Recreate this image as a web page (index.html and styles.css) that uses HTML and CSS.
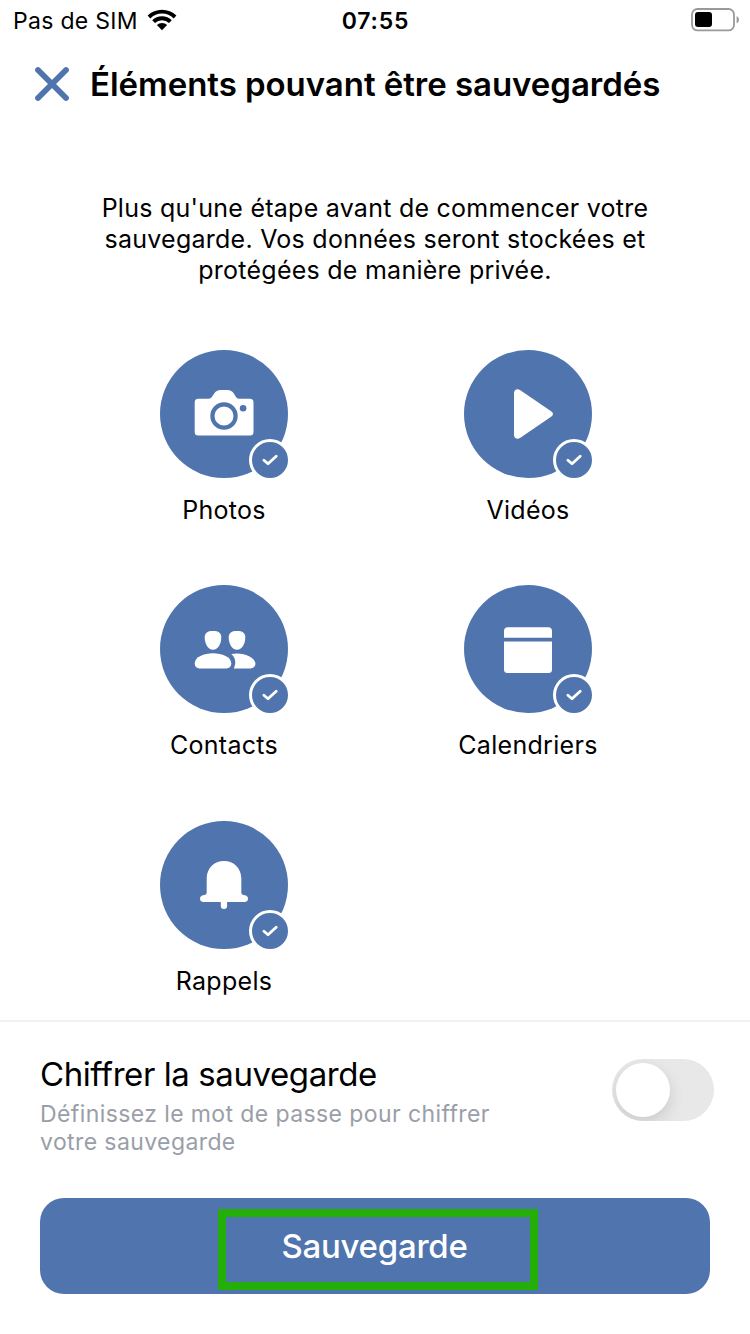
FILE: index.html
```html
<!DOCTYPE html>
<html lang="fr">
<head>
    <meta charset="UTF-8">
    <meta name="viewport" content="width=device-width, initial-scale=1.0">
    <title>Sauvegarde</title>
    <link rel="stylesheet" href="styles.css">
</head>
<body>
    <div class="status-bar">
        <div class="carrier">
            <span class="carrier-name">Pas de SIM</span>
            <svg class="wifi" width="30" height="22" viewBox="0 0 30 22">
                <path d="M0.6 6.6 A20.4 20.4 0 0 1 29.4 6.6 L26.7 9.4 A16.6 16.6 0 0 0 3.3 9.4 Z"/>
                <path d="M5.2 11.3 A13.9 13.9 0 0 1 24.8 11.3 L22 14.1 A9.9 9.9 0 0 0 8 14.1 Z"/>
                <path d="M9.9 16 A7.2 7.2 0 0 1 20.1 16 L15 21.2 Z"/>
            </svg>
        </div>
        <span class="time">07:55</span>
        <svg class="battery" width="49" height="24" viewBox="0 0 49 24">
            <rect x="1" y="1" width="42" height="21.4" rx="5.5" fill="none" stroke="#999" stroke-width="1.8"/>
            <rect x="4" y="4" width="17" height="15" rx="3"/>
            <path d="M45.6 8 Q48 9 48 11.7 Q48 14.4 45.6 15.4 Z" fill="#999"/>
        </svg>
    </div>

    <div class="header">
        <svg class="close" width="36" height="36" viewBox="0 0 36 36">
            <path d="M4 4 L32 32 M32 4 L4 32"/>
        </svg>
        <h1>Éléments pouvant être sauvegardés</h1>
    </div>

    <p class="intro">Plus qu'une étape avant de commencer votre<br>sauvegarde. Vos données seront stockées et<br>protégées de manière privée.</p>

    <div class="items">
        <div class="item">
            <svg class="icon" viewBox="0 0 128 128">
                <circle class="blue" cx="64" cy="64" r="64"/>
                <path class="white" d="M38.2 48.8 H48.5 Q50.8 48.8 52 46.8 L54 43.7 Q56.5 40 60.5 40 H67.5 Q71.5 40 74 43.7 L75.8 46.8 Q77 48.8 79 48.8 H90 Q93.5 48.8 93.5 52.3 V82 Q93.5 85.5 90 85.5 H38.2 Q34.7 85.5 34.7 82 V52.3 Q34.7 48.8 38.2 48.8 Z"/>
                <circle cx="64" cy="66" r="11.6" fill="none" stroke="#5074ae" stroke-width="4.2"/>
                <circle class="blue" cx="83.1" cy="58.2" r="3.3"/>
                <circle class="badge" cx="110" cy="110" r="19.5"/>
                <path class="check" d="M103.9 110.2 L108 113.7 L116.2 106.3"/>
            </svg>
            <span class="label">Photos</span>
        </div>
        <div class="item">
            <svg class="icon" viewBox="0 0 128 128">
                <circle class="blue" cx="64" cy="64" r="64"/>
                <path class="white" d="M50 43 C50 39.6 53.2 38.2 56 40 L87.1 61.2 C89.6 62.9 89.6 65.1 87.1 66.8 L56 88 C53.2 89.8 50 88.4 50 85 Z"/>
                <circle class="badge" cx="110" cy="110" r="19.5"/>
                <path class="check" d="M103.9 110.2 L108 113.7 L116.2 106.3"/>
            </svg>
            <span class="label">Vidéos</span>
        </div>
        <div class="item">
            <svg class="icon" viewBox="0 0 128 128">
                <circle class="blue" cx="64" cy="64" r="64"/>
                <path class="white" d="M53 46 C58.5 46 61.3 47.8 61.3 52.5 C61.3 58.5 58 64.8 53 64.8 C48 64.8 44.7 58.5 44.7 52.5 C44.7 47.8 47.5 46 53 46 Z"/>
                <path class="white" d="M77 46 C82.5 46 85.3 47.8 85.3 52.5 C85.3 58.5 82 64.8 77 64.8 C72 64.8 68.7 58.5 68.7 52.5 C68.7 47.8 71.5 46 77 46 Z"/>
                <path class="white" d="M53 68.3 C62 68.3 71.3 72 71.3 78.5 C71.3 81.5 69.5 83.4 66.5 83.4 H39.5 C36.5 83.4 34.7 81.5 34.7 78.5 C34.7 72 44 68.3 53 68.3 Z"/>
                <path class="white" d="M71.3 69 C82 66.8 95.4 71.5 95.4 78.8 C95.4 81.5 93.5 83.4 90.5 83.4 H73.8 C76.5 78 75.5 72.5 71.3 69 Z"/>
                <circle class="badge" cx="110" cy="110" r="19.5"/>
                <path class="check" d="M103.9 110.2 L108 113.7 L116.2 106.3"/>
            </svg>
            <span class="label">Contacts</span>
        </div>
        <div class="item">
            <svg class="icon" viewBox="0 0 128 128">
                <circle class="blue" cx="64" cy="64" r="64"/>
                <path class="white" d="M40 52.7 V46 Q40 42.2 43.8 42.2 H84.2 Q88 42.2 88 46 V52.7 Z"/>
                <path class="white" d="M40 56.5 H88 V84.5 Q88 88 84.5 88 H43.5 Q40 88 40 84.5 Z"/>
                <circle class="badge" cx="110" cy="110" r="19.5"/>
                <path class="check" d="M103.9 110.2 L108 113.7 L116.2 106.3"/>
            </svg>
            <span class="label">Calendriers</span>
        </div>
        <div class="item">
            <svg class="icon" viewBox="0 0 128 128">
                <circle class="blue" cx="64" cy="64" r="64"/>
                <path class="white" d="M64 40 C74 40 81.3 47.3 81.3 57.5 V71.5 Q81.3 73.6 83.4 74 L85 74.2 Q88 74.8 88 77.6 Q88 81 84.5 81 H67.1 V84.8 Q67.1 88 64 88 Q60.8 88 60.8 84.8 V81 H43.5 Q40 81 40 77.6 Q40 74.8 43 74.2 L44.6 74 Q46.7 73.6 46.7 71.5 V57.5 C46.7 47.3 54 40 64 40 Z"/>
                <circle class="badge" cx="110" cy="110" r="19.5"/>
                <path class="check" d="M103.9 110.2 L108 113.7 L116.2 106.3"/>
            </svg>
            <span class="label">Rappels</span>
        </div>
    </div>

    <div class="footer">
        <div class="encrypt">
            <div class="encrypt-text">
                <h2>Chiffrer la sauvegarde</h2>
                <p>Définissez le mot de passe pour chiffrer<br>votre sauvegarde</p>
            </div>
            <div class="toggle"><div class="knob"></div></div>
        </div>
        <div class="btn">
            <div class="highlight"><span>Sauvegarde</span></div>
        </div>
    </div>
</body>
</html>
```
FILE: styles.css
```css
* {
    box-sizing: border-box;
}
body {
    margin: 0;
    width: 750px;
    height: 1334px;
    background: #fff;
    color: #000;
    font-family: Inter, sans-serif;
    overflow: hidden;
}
h1, h2, p {
    margin: 0;
    white-space: nowrap;
}
svg {
    display: block;
    flex-shrink: 0;
}
/* Status bar */
.status-bar {
    display: grid;
    grid-template-columns: 1fr auto 1fr;
    height: 40px;
    padding: 0 10px 0 13px;
    font-size: 23px;
    line-height: 42px;
}
.carrier {
    display: flex;
}
.carrier-name {
    width: 134px;
    letter-spacing: 0.3px;
}
.wifi {
    margin-top: 9px;
}
.time {
    margin-left: -2px;
    font-weight: 600;
    letter-spacing: 0.8px;
}
.battery {
    justify-self: end;
    margin-top: 8px;
}
/* Header */
.header {
    display: flex;
    align-items: center;
    height: 88px;
    padding-left: 34px;
}
.close {
    stroke: #5074ae;
    stroke-width: 5.8;
    stroke-linecap: round;
}
h1 {
    margin-left: 20px;
    font-size: 33px;
    font-weight: 600;
    letter-spacing: -0.04px;
}
.intro {
    margin-top: 65px;
    font-size: 25px;
    line-height: 31px;
    letter-spacing: 0.25px;
    text-align: center;
}
/* Items */
.items {
    display: grid;
    grid-template-columns: 304px 304px;
    grid-template-rows: 235px 236px;
    justify-content: center;
    height: 670px;
    padding: 64px 0 0 2px;
}
.item {
    display: flex;
    flex-direction: column;
    align-items: center;
}
.icon {
    width: 128px;
    height: 128px;
    overflow: visible;
}
.blue {
    fill: #5074ae;
}
.white {
    fill: #fff;
}
.badge {
    fill: #5074ae;
    stroke: #fff;
    stroke-width: 3;
}
.check {
    fill: none;
    stroke: #fff;
    stroke-width: 2.8;
    stroke-linecap: round;
    stroke-linejoin: round;
}
.label {
    margin-top: 16px;
    font-size: 25px;
    line-height: 32px;
    letter-spacing: 0.3px;
}
/* Footer */
.footer {
    margin-top: 64px;
    padding: 37px 40px 0;
    border-top: 2px solid #f1f1f6;
}
.encrypt {
    display: flex;
    justify-content: space-between;
    height: 139px;
    margin-right: -4px;
}
h2 {
    margin-top: -5px;
    font-size: 33px;
    font-weight: 400;
    line-height: 40px;
    letter-spacing: -0.42px;
}
.encrypt-text p {
    margin-top: 6px;
    color: #9a9ea8;
    font-size: 23px;
    line-height: 28px;
    letter-spacing: 0.4px;
}
.toggle {
    width: 102px;
    height: 62px;
    padding: 4px;
    border-radius: 31px;
    background: #e8e8e8;
    overflow: hidden;
}
.knob {
    width: 54px;
    height: 54px;
    border-radius: 50%;
    background: #fff;
    box-shadow: 0 6px 16px rgba(0, 0, 0, 0.13);
}
.btn {
    height: 96px;
    padding: 11px 0 0 178px;
    border-radius: 24px;
    background: #5074ae;
}
.highlight {
    width: 320px;
    height: 81px;
    padding-right: 7px;
    border: 8px solid #23ae08;
    color: #fff;
    font-size: 33px;
    font-weight: 500;
    line-height: 58px;
    letter-spacing: -0.25px;
    text-align: center;
}
```
